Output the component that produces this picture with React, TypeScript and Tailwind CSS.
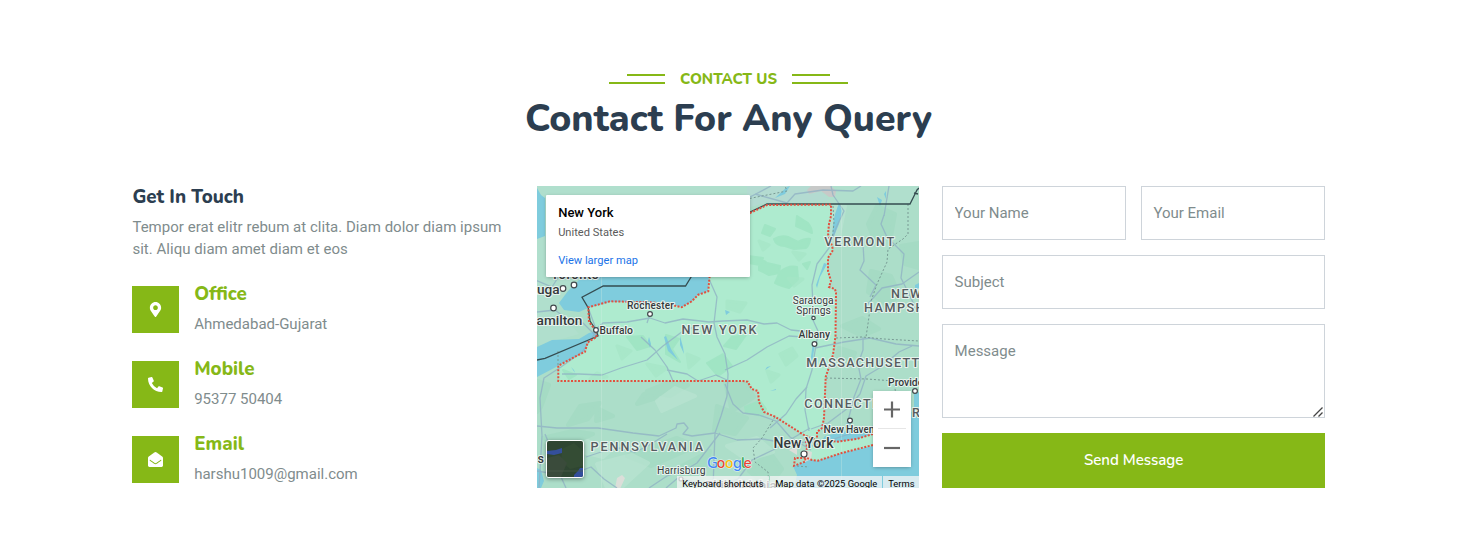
import type { ReactNode } from "react";
import { FaEnvelopeOpen, FaMapMarkerAlt, FaPhoneAlt } from "react-icons/fa";

const heading = "font-['Nunito','Lato',sans-serif]";

function Rule({ side }: { side: "left" | "right" }) {
  return (
    <span className={`flex flex-col gap-[6px] ${side === "left" ? "items-end" : "items-start"}`}>
      <span className="h-[2px] w-[38px] bg-[#86b817]" />
      <span className="h-[2px] w-[56px] bg-[#86b817]" />
    </span>
  );
}

function ContactItem({ icon, title, value }: { icon: ReactNode; title: string; value: string }) {
  return (
    <div className="flex h-[47px]">
      <div className="flex size-[47px] shrink-0 items-center justify-center bg-[#86b817] text-[15px] text-white">
        {icon}
      </div>
      <div className="-mt-[3px] ml-[15.2px]">
        <h5 className={`${heading} text-[18.75px] leading-[23px] font-extrabold whitespace-nowrap text-[#86b817]`}>{title}</h5>
        <p className="mt-[7px] text-[15px] leading-[22px]">{value}</p>
      </div>
    </div>
  );
}

const NY =
  "M213 27L230 19L294 18.6L294 30L292 38L291 48L295 60L296 64L291 72L291 85L294 95L292 101L298 103L299 107L298.5 150L296 169L288.7 191L287 232L285 242L280 246L280 254L268 249.7L238 230.7L227 226L222 216L221 205L214.7 203L210.7 195.7L206 195L21.3 195L21.3 179.7L38 170.7L48 165.7L50.7 156.3L59.7 151L59 144.7L52 136L51.3 121.3L73 115.3L113 116.3L131 118L144.7 121.3L154.7 115.3L161.3 108.7L171.3 105.3L172.3 93L177 60Z";
const ISLAND =
  "M268 262L284 257L301 255.7L319.7 253L336 248L347 243L340 259L304.7 267L281 274.7L275 274L268 272Z";

const roads = [
  "M-2 94L15 101L22 90M0 126L18 124L30 133L46 137L60 151",
  "M52 124L59 143L66 137L90 136L113 132L128 137L146 133L172 136L186 135L210 134L227 138L240 137L254 144L273 146L281 153",
  "M59 146L45 166L24 181L7 192L3 212L5 250L2 302",
  "M113 128L110 137M172 93L180 111L177 137L180 151L188 168L191 188L190 210L184 230L178 247L176 302",
  "M104 151L118 164L130 181L136 195M25 188L42 188L65 189L84 182L110 174L126 160L146 145L160 140",
  "M130 184L150 188L161 195L179 189L190 194",
  "M0 240L20 242L61 242L96 247L122 250L139 242L140 238L147 237L151 242L146 248L155 250L178 247L200 254L226 253L248 257L278 256",
  "M8 248L15 265L20 282L29 302M49 271L70 264L82 262L98 266L109 261L130 248",
  "M112 302L130 290L150 283L160 277L173 260L183 247",
  "M0 285L30 290L54 281L67 293L80 302M129 302L142 291L160 297L180 300L201 293L215 274L236 264L256 252L273 242",
  "M188 198L196 218L206 227L222 229L239 235L253 251L274 264",
  "M281 148L278 165L275 184L269 203L268 224L272 245",
  "M278 162L307 156L333 152L359 158L382 160",
  "M274 243L291 237L311 222L323 208L329 190L344 181L362 166L375 160",
  "M326 151L326 164L321 178L324 193L317 211L313 227L309 242",
  "M281 145L275 132L276 120L275 99L280 78L292 62L299 42L307 25L296 9L294 0",
  "M329 120L345 102L365 98L382 86M326 58L327 75L323 84L339 99L333 111",
  "M347 29L344 38L350 51L359 60L367 68L364 92L372 108L380 125",
  "M187 15L213 11L234 0M218 8L250 17L258 8L286 4L316 5L324 0M347 30L352 0",
  "M267 151L252 150L230 161L210 174L188 184",
  "M233 242L249 228L259 213L270 201M275 260L291 255L306 250L323 245",
];

const towns: [number, number, number][] = [
  [37, 99, 2.8], [26, 102.5, 2.8], [16.5, 122, 2.8], [59, 144, 2.4], [113, 128, 2.4],
  [276.5, 132, 1.7], [277.5, 158, 2.4], [313, 234.5, 2.4], [378, 205, 2.4], [267, 268, 3], [144, 293, 2],
];

type Label = { t: string; x: number; y: number; s: number; w?: number; len?: number; c?: string; end?: boolean; sp?: number };
const labels: Label[] = [
  { t: "Toronto", x: 14, y: 93, s: 13, len: 48 },
  { t: "Mississauga", x: 22.6, y: 108, s: 13.6, end: true },
  { t: "Hamilton", x: 45.3, y: 138.5, s: 13.6, end: true },
  { t: "Rochester", x: 90, y: 122.8, s: 10.4, len: 47 },
  { t: "Buffalo", x: 62.5, y: 147.5, s: 10.4, len: 33.5 },
  { t: "Saratoga", x: 255.7, y: 118, s: 10.4, len: 41, w: 400 },
  { t: "Springs", x: 259.3, y: 128, s: 10.4, len: 34.5, w: 400 },
  { t: "Albany", x: 261.6, y: 152.2, s: 10.4, len: 31.5 },
  { t: "Providence", x: 351, y: 199.8, s: 10.4 },
  { t: "New Haven", x: 286.6, y: 247, s: 10.4, len: 51 },
  { t: "New York", x: 236.5, y: 261.5, s: 14, len: 60 },
  { t: "Harrisburg", x: 120, y: 288, s: 10.4, len: 48.5, w: 400 },
  { t: "s", x: 0.5, y: 277, s: 12.5 },
  { t: "Philadelphia", x: 168, y: 304, s: 13 },
  { t: "NEW YORK", x: 144.5, y: 147.5, s: 12.6, len: 75, c: "#565c60" },
  { t: "VERMONT", x: 287.3, y: 59.7, s: 12.6, len: 70, c: "#565c60" },
  { t: "NEW", x: 354, y: 112, s: 12.6, c: "#565c60", sp: 1.5 },
  { t: "HAMPSHIRE", x: 327, y: 125.7, s: 12.6, c: "#565c60", sp: 1.5 },
  { t: "MASSACHUSETTS", x: 269.3, y: 181, s: 12.6, c: "#565c60", sp: 1.3 },
  { t: "CONNECTICUT", x: 267.3, y: 222.3, s: 12.6, c: "#565c60", sp: 1.45 },
  { t: "RI", x: 375, y: 231, s: 12.6, c: "#565c60", sp: 1.2 },
  { t: "PENNSYLVANIA", x: 53.5, y: 265.3, s: 12.6, len: 112.5, c: "#565c60" },
];

const google: [string, number, string][] = [
  ["G", 170, "#4285f4"],
  ["o", 179.8, "#ea4335"],
  ["o", 188.1, "#fbbc04"],
  ["g", 195.9, "#4285f4"],
  ["l", 203.9, "#34a853"],
  ["e", 206.6, "#ea4335"],
];

function MapDrawing() {
  return (
    <svg className="block h-[302px] w-[382px]" viewBox="0 0 382 302" fontFamily="Roboto, sans-serif">
      <rect width="382" height="302" fill="#acdec9" />
      <g fill="#9fd9c0" stroke="#9fd9c0" strokeWidth="4" strokeLinejoin="round" opacity=".5">
        <path d="M340 20l18 8-4 22-15 8-8-20zM334 85l20 5 9 20-14 8-18-12zM364 60l18-3v25l-14-4zM305 140l20-8 17 11-17 7zM302 162l16 5-6 12-15 0zM188 196l21 1 8 14-22 14zM107 208l18-7-6 11-19 6zM43 220l20-3-12 16-20 6zM0 195l12 4-8 22-4 5zM60 222l16 8-17 5zM6 252l30-7 20 3-30 14zM90 270l50-18 20 8-46 20zM180 220l30 12-12 16-21-4zM212 285l20-20 13 18-14 19z" />
        <path d="M0 60l9-5v34l-9 5zM110 205l25-10 16 4-18 11zM145 280l28-15-8 27-23 8z" />
      </g>
      <g fill="#bce5d3" stroke="#bce5d3" strokeWidth="4" strokeLinejoin="round" opacity=".6">
        <path d="M296 20h12l-6 30-8 8zM355 0h18l-8 15-14-5zM120 215l18-13 20 8-33 15zM33 263l17-8 25 8-9 8zM60 278l35-9 16 8-27 25H70zM190 260l30-8 16 14-26 8z" />
      </g>
      <path d="M0 0H382V4L373 18H213L160 70L40 91L18 123L42 148L0 160Z" fill="#b0dfcd" />
      <path d="M210 0h70l12 14-64 3-18 5z" fill="#b3dbd1" />
      <path d="M274 0h20l5 5-1 6-6 0-8-6-12 3-2-4z" fill="#c7c9c8" />
      <path d={NY} fill="#aeebcf" />
      <g fill="#9ce3c1" stroke="#9ce3c1" strokeWidth="2" strokeLinejoin="round" opacity=".75">
        <path d="M237 53q7-4 14-2l10 5q8-4 12-3-1 7-4 9l-12 1-9-3q-9 0-11-7zM222 74q6 0 8 3l13 3-1 7-10 2-10-5zM243 86q8-7 17-5l1 12-9 9q-9-2-14-5zM260 30l11 7q4 5 4 10l-16-7zM228 39l10 4-5 7-8-3zM211 70l15 2-3 7-11-2zM266 78l7-2-3 7z" />
        <path d="M129 149l13 4-7 10 8 13-14-8zM90 151l16-1 7 10-13 4zM26 184l13 5-7 4zM170 177l16-9 9 12-14 10zM208 221l15-6 6 8-4 7-16-4zM187 160l8-9 14-2-10 14z" />
      </g>
      <g fill="#a5e5c6" stroke="#a5e5c6" strokeWidth="3" strokeLinejoin="round" opacity=".65">
        <path d="M60 187l10 4-17 2zM251 92l15 1-9 7zM243 168l12-6 5 8-11 9zM110 178l20 4-11 8zM190 115l19 2-6 9-13-4zM222 55l10 4-6 5zM256 66l12 2-6 6zM80 160l14 5-9 8zM230 185l12 4-8 7zM150 168l12 5-10 9z" />
      </g>
      <g fill="#7fccdd">
        <path d="M0 2l4 7 4 3v38l-8 3z" />
        <path d="M45 91L31 105L22 117L27 124L42 126L51 122L73 116L113 116L131 118L145 121L155 115L161 109L171 105L172 86L100 80Z" />
        <path d="M0 161L15 154L42 153L52 147L60 145L60 149L50 156L48 165L38 171L21 180L0 191Z" />
        <path d="M257 302L260 289L256 280L268 276L281 260L288 250L305 246L335 240L360 230L382 224V302Z" />
        <path d="M302 17l3 8-3 13-7 17 1-17 2-10zM238 12l12-11 3-1-5 8zM340 11l5 3-2 6zM129 150l5 13 7 11-10-9-4-14zM112 151l2 7-1 4-2-7zM143 150l3 11 1 7-4-9zM287 77l3 1-7 13-3 11-1-3zM188 124l5 2-4 3zM233 205l6-2v1zM230 181l4-1-6 4zM276 156l2 2-4 25-1-5zM310 239l3-6 1 7zM382 97l-4 2v6l4-2zM347 8l2-3 0 8zM0 302v-20l4 2 3 11-3 7zM377 208l5-2v15l-5 1zM34 181l3 3 1 3z" />
      </g>
      <path d={ISLAND} fill="#aeebcf" />
      <path d="M80 292l5-3 3 3-5 11h-5zM268 264l7 2-1 7-6 3zM252 264l8-4v9z" fill="#dcded9" />
      <g fill="none" stroke="#8fb0c4" strokeWidth="1.3" opacity=".75" strokeLinejoin="round">
        {roads.map((d) => (
          <path key={d} d={d} />
        ))}
      </g>
      <g fill="none" stroke="#789a94" strokeWidth="1" strokeDasharray="2 2">
        <path d="M371 18L371 48L366 53L351 63L350 76L340 98L333 118L332 131L329 151M299 152L325 151L347 153L382 155M289 192L330 193L357 195L361 225M238 231L225 252L216 262L218 276L231 286L232 302M296 20L297 37L295 55M21 179V165M187 23L210 13L250 5L248 0M260 280L272 281" />
      </g>
      <path d="M64.5 91V302M304.5 18V302" stroke="#d9eee6" strokeWidth=".6" opacity=".5" />
      <g fill="none" stroke="#354c50" strokeWidth="1.3">
        <path d="M154.7 90L148.5 100H66.3L45 111.3L51.3 122L53 135L59 144L61 150L8 172.3L0 174" />
        <path d="M213 26L230 18H373L378 8L380 4L382 2M377 7L381 8" />
      </g>
      <g fill="none" stroke="#e2503f" strokeWidth="2" strokeDasharray="2 1.5">
        <path d={NY} />
        <path d="M336 248L319.7 253L301 255.7L285 254M336 259L304.7 267L281 274.7L275 274L270 272L258 272L257 279.7L268 275.7L270 261L268 250" />
      </g>
      {towns.map(([x, y, r]) => (
        <circle key={`${x}-${y}`} cx={x} cy={y} r={r} fill="#fff" stroke="#42494d" strokeWidth="1.2" />
      ))}
      <g paintOrder="stroke" strokeLinejoin="round" stroke="#e5f3ed" strokeWidth="2.2">
        {labels.map((l) => (
          <text
            key={l.t + l.x}
            x={l.x}
            y={l.y}
            fontSize={l.s}
            fontWeight={l.w ?? 500}
            fill={l.c ?? "#35393c"}
            textLength={l.len}
            letterSpacing={l.sp}
            textAnchor={l.end ? "end" : "start"}
          >
            {l.t}
          </text>
        ))}
      </g>
      <g fontSize="15" fontWeight="600" fontFamily="Nunito, Lato, sans-serif" paintOrder="stroke" stroke="#e8f6f0" strokeWidth="1">
        {google.map(([ch, x, color]) => (
          <text key={x} x={x} y="281.9" fill={color}>
            {ch}
          </text>
        ))}
      </g>
    </svg>
  );
}

function MapPanel() {
  return (
    <div className="relative h-[302px] w-[382px] overflow-hidden">
      <MapDrawing />
      <div className="absolute top-[9px] left-[9px] h-[82px] w-[204px] rounded-[1px] bg-white px-[12px] pt-[9px] shadow-[0_1px_4px_-1px_rgba(0,0,0,0.4)]">
        <div className="text-[13px] leading-[18px] font-medium text-black">New York</div>
        <div className="mt-[4px] text-[11.1px] leading-[14px] text-[#5b5b5b]">United States</div>
        <div className="mt-[14px] text-[11.1px] leading-[14px] text-[#1a73e8]">View larger map</div>
      </div>
      <div className="absolute top-[254px] left-[9px] size-[38px] overflow-hidden rounded-[3px] border border-white shadow-[0_1px_4px_rgba(0,0,0,0.4)]">
        <svg className="block size-full" viewBox="0 0 36 36">
          <rect width="36" height="36" fill="#2f4632" />
          <path d="M15 8l12-6 9 8v15l-13 3-9-8z" fill="#344c34" />
          <path d="M0 17l12-3 8 8-6 14H0z" fill="#3a4b3b" />
          <path d="M0 10l9-1 6-2v5l-8 2-7-1zM27 34l4-4 2-3h3v9h-9z" fill="#344f9c" />
          <path d="M0 30h36" stroke="#53624f" strokeWidth=".6" />
        </svg>
      </div>
      <div className="absolute top-[205px] left-[336px] flex h-[76px] w-[38px] flex-col items-center bg-white shadow-[0_1px_4px_-1px_rgba(0,0,0,0.4)]">
        <svg className="h-[37px] w-[38px]" viewBox="0 0 38 37" stroke="#666" strokeWidth="2.2">
          <path d="M11 18.5H27M19 10.5V26.5" />
        </svg>
        <span className="h-px w-[28px] bg-[#e6e6e6]" />
        <svg className="h-[38px] w-[38px]" viewBox="0 0 38 38" stroke="#666" strokeWidth="2.2">
          <path d="M11 19H27" />
        </svg>
      </div>
      <div className="absolute top-[290px] right-0 flex h-[14px] text-[9.4px] leading-[16px] whitespace-nowrap text-black">
        <span className="w-[92px] bg-[#f5f5f5]/75 pl-[5px]">Keyboard shortcuts</span>
        <span className="ml-px w-[112px] bg-[#f5f5f5]/75 pl-[5px]">Map data ©2025 Google</span>
        <span className="ml-px w-[36px] bg-[#f5f5f5]/75 pl-[5px]">Terms</span>
      </div>
    </div>
  );
}

const field =
  "block h-[54px] w-full border border-[#ced4da] bg-white px-[11.25px] text-[15px] leading-[22px] outline-none placeholder:text-[#7f8c8d] placeholder:opacity-100";

export default function App() {
  return (
    <main className="h-[548px] w-full overflow-hidden bg-white font-['Roboto',sans-serif] text-[15px] text-[#7f8c8d]">
      <header className="flex flex-col items-center pt-[68px]">
        <div className="flex h-[22px] items-center gap-[15px]">
          <Rule side="left" />
          <h6 className={`${heading} w-[97px] text-center text-[15px] leading-[22px] font-extrabold whitespace-nowrap text-[#86b817]`}>CONTACT US</h6>
          <Rule side="right" />
        </div>
        <h1 className={`${heading} mt-[6px] text-[37.5px] leading-[45px] font-extrabold whitespace-nowrap text-[#2c3e50]`}>
          Contact For Any Query
        </h1>
      </header>
      <div className="mx-auto mt-[45px] grid w-[1193px] grid-cols-3 gap-[22.5px]">
        <section>
          <h5 className={`${heading} pl-[0.4px] text-[18.75px] leading-[22px] font-extrabold text-[#2c3e50]`}>Get In Touch</h5>
          <p className="mt-[8px] pl-[0.4px] leading-[22px] tracking-[0.025px]">
            Tempor erat elitr rebum at clita. Diam dolor diam ipsum sit. Aliqu diam amet diam et eos
          </p>
          <div className="mt-[26px] flex flex-col gap-[28px]">
            <ContactItem icon={<FaMapMarkerAlt />} title="Office" value="Ahmedabad-Gujarat" />
            <ContactItem icon={<FaPhoneAlt />} title="Mobile" value="95377 50404" />
            <ContactItem icon={<FaEnvelopeOpen />} title="Email" value="harshu1009@gmail.com" />
          </div>
        </section>
        <MapPanel />
        <form className="flex flex-col gap-[15px]">
          <div className="grid grid-cols-2 gap-[15px]">
            <input className={field} placeholder="Your Name" />
            <input className={field} placeholder="Your Email" />
          </div>
          <input className={field} placeholder="Subject" />
          <div className="relative">
            <textarea
              className="block h-[94px] w-full resize-none border border-[#ced4da] bg-white px-[11.25px] pt-[15px] text-[15px] leading-[22px] outline-none placeholder:text-[#7f8c8d] placeholder:opacity-100"
              placeholder="Message"
            />
            <svg className="absolute right-[2px] bottom-[1px] size-[10px]" viewBox="0 0 10 10" stroke="#444" strokeWidth="1.3">
              <path d="M0.5 9.5L9.5 0.5M5.5 9.5L9.5 5.5" />
            </svg>
          </div>
          <button type="button" className={`${heading} h-[55px] w-full bg-[#86b817] text-[15px] font-[650] text-white`}>
            Send Message
          </button>
        </form>
      </div>
    </main>
  );
}
